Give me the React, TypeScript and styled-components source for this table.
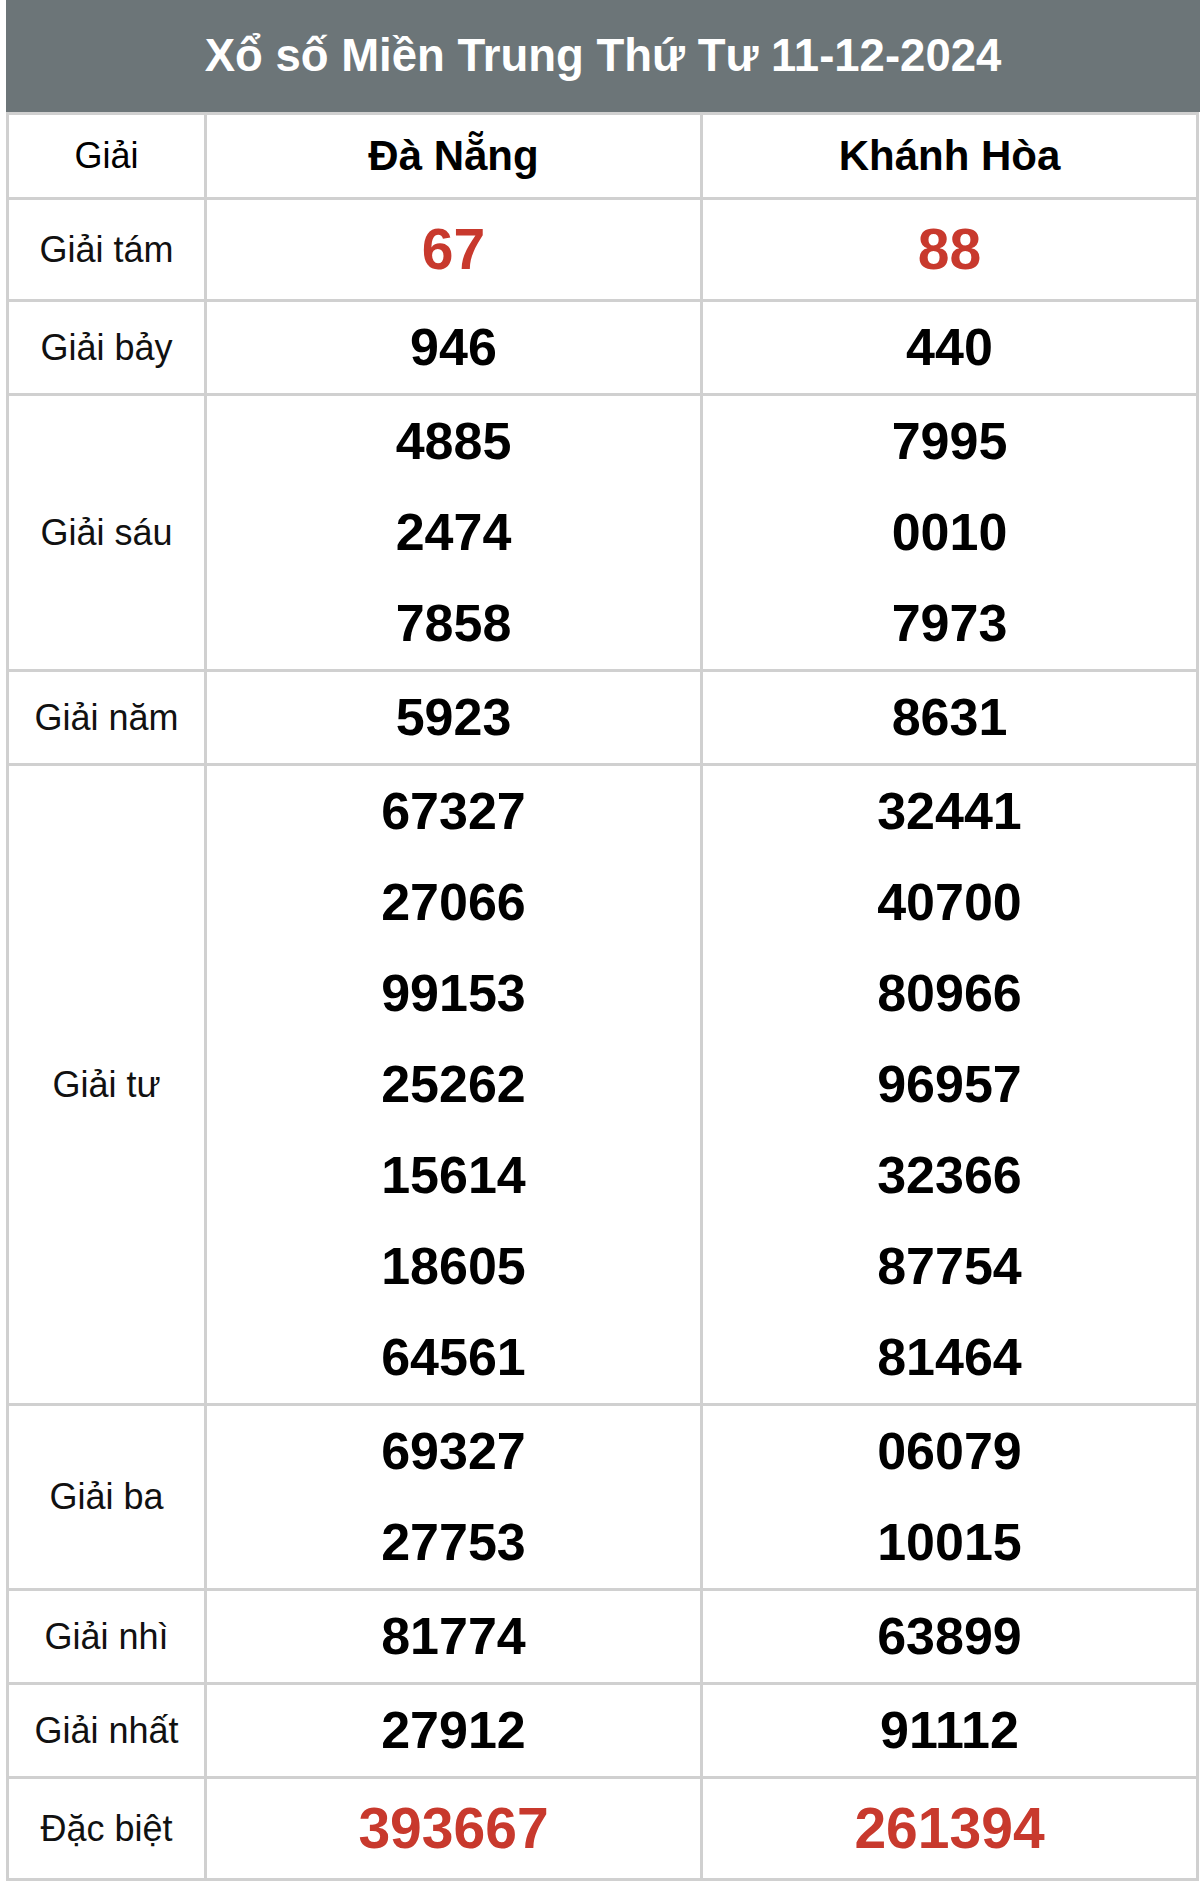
import React from "react";
import styled, { createGlobalStyle } from "styled-components";

const GlobalStyle = createGlobalStyle`
  html, body {
    margin: 0;
    padding: 0;
    background: #ffffff;
  }
  body {
    font-family: "Liberation Sans", Arial, sans-serif;
  }
`;

interface IPrize {
  label: string;
  danang: string[];
  khanhhoa: string[];
  big?: boolean;
}

const prizes: IPrize[] = [
  { label: "Giải tám", danang: ["67"], khanhhoa: ["88"], big: true },
  { label: "Giải bảy", danang: ["946"], khanhhoa: ["440"] },
  { label: "Giải sáu", danang: ["4885", "2474", "7858"], khanhhoa: ["7995", "0010", "7973"] },
  { label: "Giải năm", danang: ["5923"], khanhhoa: ["8631"] },
  {
    label: "Giải tư",
    danang: ["67327", "27066", "99153", "25262", "15614", "18605", "64561"],
    khanhhoa: ["32441", "40700", "80966", "96957", "32366", "87754", "81464"],
  },
  { label: "Giải ba", danang: ["69327", "27753"], khanhhoa: ["06079", "10015"] },
  { label: "Giải nhì", danang: ["81774"], khanhhoa: ["63899"] },
  { label: "Giải nhất", danang: ["27912"], khanhhoa: ["91112"] },
  { label: "Đặc biệt", danang: ["393667"], khanhhoa: ["261394"], big: true },
];

export default function App() {
  return (
    <>
      <GlobalStyle />
      <Wrapper>
        <TitleBar>Xổ số Miền Trung Thứ Tư 11-12-2024</TitleBar>
        <Grid>
          <HeadCell>Giải</HeadCell>
          <HeadCell bold>Đà Nẵng</HeadCell>
          <HeadCell bold>Khánh Hòa</HeadCell>
          {prizes.map((prize) => (
            <React.Fragment key={prize.label}>
              <LabelCell>{prize.label}</LabelCell>
              <NumberCell>
                {prize.danang.map((n, i) => (
                  <NumberLine key={i} big={prize.big}>
                    {n}
                  </NumberLine>
                ))}
              </NumberCell>
              <NumberCell>
                {prize.khanhhoa.map((n, i) => (
                  <NumberLine key={i} big={prize.big}>
                    {n}
                  </NumberLine>
                ))}
              </NumberCell>
            </React.Fragment>
          ))}
        </Grid>
      </Wrapper>
    </>
  );
}

const Wrapper = styled.div`
  margin-left: 6px;
  width: 1194px;
`;

const TitleBar = styled.div`
  height: 112px;
  display: flex;
  align-items: center;
  justify-content: center;
  background: #6c7578;
  color: #ffffff;
  font-size: 45.5px;
  font-weight: bold;
`;

const Grid = styled.div`
  display: grid;
  grid-template-columns: 195px 493px 493px;
  gap: 3px;
  padding: 3px;
  width: 1187px;
  background: #d0d0d0;
`;

const Cell = styled.div`
  background: #ffffff;
  display: flex;
  flex-direction: column;
  align-items: center;
  justify-content: center;
`;

const HeadCell = styled(Cell)<{ bold?: boolean }>`
  height: 82px;
  color: #000000;
  font-size: ${({ bold }) => (bold ? "42px" : "36px")};
  font-weight: ${({ bold }) => (bold ? "bold" : "normal")};
`;

const LabelCell = styled(Cell)`
  color: #111111;
  font-size: 36px;
`;

const NumberCell = styled(Cell)``;

const NumberLine = styled.div<{ big?: boolean }>`
  height: ${({ big }) => (big ? "99px" : "91px")};
  line-height: ${({ big }) => (big ? "99px" : "91px")};
  font-size: ${({ big }) => (big ? "57px" : "52px")};
  font-weight: bold;
  color: ${({ big }) => (big ? "#c8392d" : "#000000")};
`;
